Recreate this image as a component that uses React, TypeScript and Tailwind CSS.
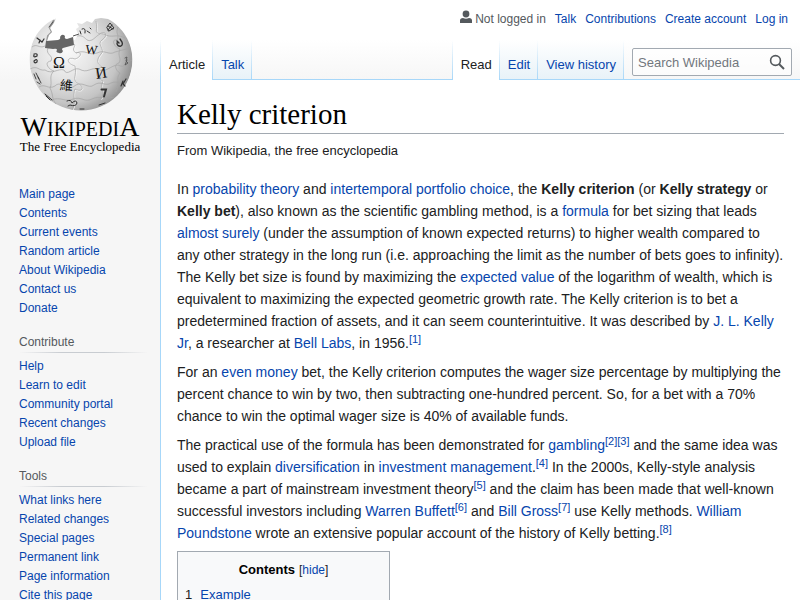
import React from "react";

const LINK = "text-[#0645ad] hover:underline";

function A({ children }: { children: React.ReactNode }) {
  return (
    <a href="#" className={LINK}>
      {children}
    </a>
  );
}

function Ref({ n }: { n: number }) {
  return (
    <sup className="text-[11px] leading-none">
      <A>[{n}]</A>
    </sup>
  );
}

function Globe() {
  return (
    <svg viewBox="20 14 120 100" className="h-[100px] w-[120px]" aria-hidden="true">
      <defs>
        <radialGradient id="ball" cx="0.36" cy="0.42" r="0.68">
          <stop offset="0" stopColor="#fafafa" />
          <stop offset="0.4" stopColor="#e4e4e4" />
          <stop offset="0.75" stopColor="#c4c4c4" />
          <stop offset="1" stopColor="#8a8a8a" />
        </radialGradient>
        <clipPath id="outline">
          <path d="M56 18.5L54 23L50 28L52 32L49 35L47 41L53 43L75 40L78 34L76 29L79 27L77 23L82 24L87 21L92 23L95 19L101 18L108 19C123 27 132.5 43 132.5 60A51.5 51.5 0 0 1 29.5 60C29.5 41 40 25 56 18.5Z" />
        </clipPath>
      </defs>
      <g clipPath="url(#outline)">
        <circle cx="81" cy="59" r="51.5" fill="url(#ball)" />
        <g fill="none" stroke="#fff" strokeWidth="0.8" transform="translate(0.6 0.7)">
          <path d="M74 44C77 46 70 49 76 53C82 51 82 57 75 59C67 56 65 63 75 66C77 77 72 78 77 83C86 87 82 93 75 89C72 96 77 103 72 110" />
          <path d="M96 21C98 31 94 31 99 34C107 30 108 36 102 40C96 44 106 50 101 54C96 60 97 64 102 67C94 70 96 79 103 81C99 91 107 90 101 99" />
        </g>
        <g fill="none" stroke="#a5a5a5" strokeWidth="0.7">
          <path d="M48 48C45 55 54 55 51 61C43 62 49 70 54 71C48 76 53 82 50 88C54 96 51 98 56 104" />
          <path d="M74 44C77 46 70 49 76 53C82 51 82 57 75 59C67 56 65 63 75 66C77 77 72 78 77 83C86 87 82 93 75 89C72 96 77 103 72 110" />
          <path d="M96 21C98 31 94 31 99 34C107 30 108 36 102 40C96 44 106 50 101 54C96 60 97 64 102 67C94 70 96 79 103 81C99 91 107 90 101 99" />
          <path d="M118 27C115 34 120 35 117 40C110 39 115 48 120 49C117 56 122 58 119 63C113 64 116 71 120 73C115 79 121 82 116 92" />
          <path d="M32 47C37 43 39 49 45 46" />
          <path d="M77 36C86 34 85 43 92 40C97 37 98 33 104 34C112 39 116 33 125 38" />
          <path d="M30 69C38 65 38 71 45 70C52 75 58 68 64 70C67 77 73 67 79 69C88 74 90 67 98 69C105 74 111 65 118 65C125 69 126 62 132 60" />
          <path d="M39 87C45 83 48 90 55 86C60 80 66 90 73 87C82 79 88 90 94 85C101 80 105 87 111 83C118 80 120 86 127 80" />
          <path d="M51 100C61 96 66 103 73 99C82 96 84 103 92 99C100 95 105 100 114 97" />
          <path d="M76 53C86 49 88 56 97 53C105 49 109 56 115 52L130 48" />
        </g>
        <path d="M54 20L50 28L52 32L48 36L47 41" fill="none" stroke="#999" strokeWidth="2" />
      </g>
      <path
        d="M46 41L58 40Q61 39 60 37Q62 33 65 36Q64 39 67 39L73 37L74 45L63 48Q61 49 63 51Q62 54 59 53Q55 52 57 50Q57 48 53 49L45 48Z"
        fill="#666"
      />
      <path d="M73 36L79 34" stroke="#555" strokeWidth="1" />
      <g fill="#111" fontFamily="'Liberation Serif', serif" textAnchor="middle">
        <text x="59" y="68" fontSize="16">Ω</text>
        <text x="91" y="54" fontSize="13" transform="rotate(5 91 54)">W</text>
        <text x="102" y="78" fontSize="16" transform="rotate(-9 102 78)">И</text>
        <text x="66" y="90" fontSize="13" fontFamily="'Noto Sans CJK TC', sans-serif" transform="rotate(5 66 90)">維</text>
      </g>
      <g fill="none" stroke="#333" strokeWidth="1.4" strokeLinecap="round">
        <path d="M101.5 89.5H106L104 96.5" strokeWidth="2" />
        <path d="M117 43C117 48 124 47 122 42L120 39M117 41L119 43" />
        <path d="M80 31L81 34M82 29Q86 27 85 33M87 31L90 33M90 28L91 29" strokeWidth="1" />
        <path d="M107 27L110 23L114 28L109 31ZM108 26L113 29M112 25L108 30" strokeWidth="1" />
        <path d="M37 38L42 42L44 39M40 40L39 43" strokeWidth="1.2" />
        <path d="M49 27L53 22" strokeWidth="1" stroke="#555" />
        <path d="M34 54Q38 53 37 56Q33 58 34 55M34 61Q38 58 37 62Q34 64 34 61" strokeWidth="1.2" />
        <path d="M34 74L36 79M36 73L39 79M38 77L41 83M37 82L40 84" strokeWidth="0.9" />
        <path d="M45 94L52 100M46 96L50 100" strokeWidth="1" />
        <path d="M67 101Q71 99 72 103Q76 99 77 103Q76 107 70 105L68 106" strokeWidth="1" />
        <path d="M125 58L127 57L126 61L128 63L125 65L127 60" strokeWidth="0.9" stroke="#555" />
        <path d="M126 79L123 84L125 86M123 81L121 86" strokeWidth="1.2" />
        <path d="M99 105L105 103M80 109L84 109" strokeWidth="1" />
      </g>
    </svg>
  );
}

function Logo() {
  return (
    <a
      href="#"
      aria-label="Visit the main page"
      className="flex flex-col items-center pt-3.5 font-['Liberation_Serif',serif] text-black"
    >
      <Globe />
      <span className="mt-px text-[20px] leading-6 whitespace-nowrap">
        <span className="text-[28px] leading-6">W</span>IKIPEDI<span className="text-[28px] leading-6">A</span>
      </span>
      <span className="text-[13px] leading-3 whitespace-nowrap">The Free Encyclopedia</span>
    </a>
  );
}

const portals: { title?: string; links: string[] }[] = [
  {
    links: [
      "Main page",
      "Contents",
      "Current events",
      "Random article",
      "About Wikipedia",
      "Contact us",
      "Donate",
    ],
  },
  {
    title: "Contribute",
    links: ["Help", "Learn to edit", "Community portal", "Recent changes", "Upload file"],
  },
  {
    title: "Tools",
    links: [
      "What links here",
      "Related changes",
      "Special pages",
      "Permanent link",
      "Page information",
      "Cite this page",
    ],
  },
];

function Sidebar() {
  return (
    <aside className="w-40 shrink-0">
      <Logo />
      <div className="mt-8 flex flex-col gap-[15px] pr-3 pl-[19px] text-[12px] leading-[19px]">
        {portals.map((p, i) => (
          <nav key={i} aria-label={p.title ?? "Navigation"}>
            {p.title && (
              <>
                <h3 className="text-[#54595d]">{p.title}</h3>
                <div className="mb-1 h-px bg-[linear-gradient(to_right,rgba(200,204,209,0),#c8ccd1_33%,#c8ccd1_66%,rgba(200,204,209,0))]" />
              </>
            )}
            <ul>
              {p.links.map((l) => (
                <li key={l}>
                  <A>{l}</A>
                </li>
              ))}
            </ul>
          </nav>
        ))}
      </div>
    </aside>
  );
}

function Divider() {
  return <span className="w-px shrink-0 bg-[linear-gradient(rgba(167,215,249,0),#a7d7f9)]" />;
}

function Tab({ label, selected = false }: { label: string; selected?: boolean }) {
  return (
    <>
      <a
        href="#"
        className={
          selected
            ? "bg-white pt-[15px] pr-[7px] pl-2 leading-5 whitespace-nowrap text-[#202122]"
            : "border-b border-[#a7d7f9] bg-[linear-gradient(#fff,#e8f2f8)] pt-[15px] pr-[7px] pl-2 leading-5 whitespace-nowrap text-[#0645ad]"
        }
      >
        {label}
      </a>
      <Divider />
    </>
  );
}

function Header() {
  return (
    <header className="flex h-20 flex-col">
      <nav
        aria-label="Personal tools"
        className="flex h-10 items-start justify-end gap-[9px] pt-2.5 pr-3 text-[12px] leading-[18px]"
      >
        <span className="flex gap-[3px] text-[#54595d]">
          <svg viewBox="0 0 12 14" className="h-3.5 w-3" fill="#54595d" aria-hidden="true">
            <circle cx="6" cy="4" r="3.4" />
            <path d="M0 13V10.5Q0 8 3 8Q6 9.5 9 8Q12 8 12 10.5V13Z" />
          </svg>
          Not logged in
        </span>
        <A>Talk</A>
        <A>Contributions</A>
        <A>Create account</A>
        <A>Log in</A>
      </nav>
      <div className="flex h-10 text-[13px]">
        <Divider />
        <Tab label="Article" selected />
        <Tab label="Talk" />
        <div className="flex-1 border-b border-[#a7d7f9]" />
        <Divider />
        <Tab label="Read" selected />
        <Tab label="Edit" />
        <Tab label="View history" />
        <form className="border-b border-[#a7d7f9] px-2 pt-2" onSubmit={(e) => e.preventDefault()}>
          <div className="flex h-7 w-40 items-center rounded-[2px] border border-[#a2a9b1] bg-white/50 pr-1.5 pl-[5px]">
            <input
              type="search"
              aria-label="Search Wikipedia"
              placeholder="Search Wikipedia"
              className="min-w-0 flex-1 bg-transparent pt-0.5 outline-none placeholder:text-[#72777d]"
            />
            <button type="submit" aria-label="Search">
              <svg viewBox="0 0 16 16" className="size-4" fill="none" stroke="#54595d" strokeWidth="1.6">
                <circle cx="6.5" cy="6.5" r="4.9" />
                <path d="M10 10L15 15" strokeWidth="2" />
              </svg>
            </button>
          </div>
        </form>
      </div>
    </header>
  );
}

export default function App() {
  return (
    <div className="flex min-h-screen bg-[#f6f6f6] bg-[linear-gradient(#fff_40px,#f6f6f6_80px)] font-['Liberation_Sans',Arial,sans-serif] text-[#202122]">
      <Sidebar />
      <div className="flex min-w-0 flex-1 flex-col">
        <Header />
        <main className="flex-1 border-l border-[#a7d7f9] bg-white px-4 pt-4">
          <h1 className="border-b border-[#a2a9b1] font-['Liberation_Serif',serif] text-[29px] leading-[37px] text-black">
            Kelly criterion
          </h1>
          <p className="mt-2 text-[13px] leading-[18px]">From Wikipedia, the free encyclopedia</p>
          <div className="mt-[18px] flex flex-col gap-[7px] text-[14px] leading-[22px]">
            <p>
              In <A>probability theory</A> and <A>intertemporal portfolio choice</A>, the <b>Kelly criterion</b> (or{" "}
              <b>Kelly strategy</b> or <b>Kelly bet</b>), also known as the scientific gambling method, is a{" "}
              <A>formula</A> for bet sizing that leads <A>almost surely</A> (under the assumption of known expected
              returns) to higher wealth compared to any other strategy in the long run (i.e. approaching the limit as
              the number of bets goes to infinity). The Kelly bet size is found by maximizing the{" "}
              <A>expected value</A> of the logarithm of wealth, which is equivalent to maximizing the expected
              geometric growth rate. The Kelly criterion is to bet a predetermined fraction of assets, and it can seem
              counterintuitive. It was described by <A>J. L. Kelly Jr</A>, a researcher at <A>Bell Labs</A>, in 1956.
              <Ref n={1} />
            </p>
            <p>
              For an <A>even money</A> bet, the Kelly criterion computes the wager size percentage by multiplying the
              percent chance to win by two, then subtracting one-hundred percent. So, for a bet with a 70% chance to
              win the optimal wager size is 40% of available funds.
            </p>
            <p>
              The practical use of the formula has been demonstrated for <A>gambling</A>
              <Ref n={2} />
              <Ref n={3} /> and the same idea was used to explain <A>diversification</A> in{" "}
              <A>investment management</A>.<Ref n={4} /> In the 2000s, Kelly-style analysis became a part of mainstream
              investment theory
              <Ref n={5} /> and the claim has been made that well-known successful investors including{" "}
              <A>Warren Buffett</A>
              <Ref n={6} /> and <A>Bill Gross</A>
              <Ref n={7} /> use Kelly methods. <A>William Poundstone</A> wrote an extensive popular account of the
              history of Kelly betting.
              <Ref n={8} />
            </p>
            <nav
              aria-label="Contents"
              className="w-[213px] border border-[#a2a9b1] bg-[#f8f9fa] px-[7px] pt-2 text-[13px] leading-5"
            >
              <div className="flex items-baseline justify-center gap-1">
                <h2 className="font-bold text-black">Contents</h2>
                <span className="text-[12px]">
                  [<button type="button" className={LINK}>hide</button>]
                </span>
              </div>
              <ol className="mt-[5px]">
                <li className="flex gap-2">
                  <span>1</span>
                  <A>Example</A>
                </li>
              </ol>
            </nav>
          </div>
        </main>
      </div>
    </div>
  );
}
